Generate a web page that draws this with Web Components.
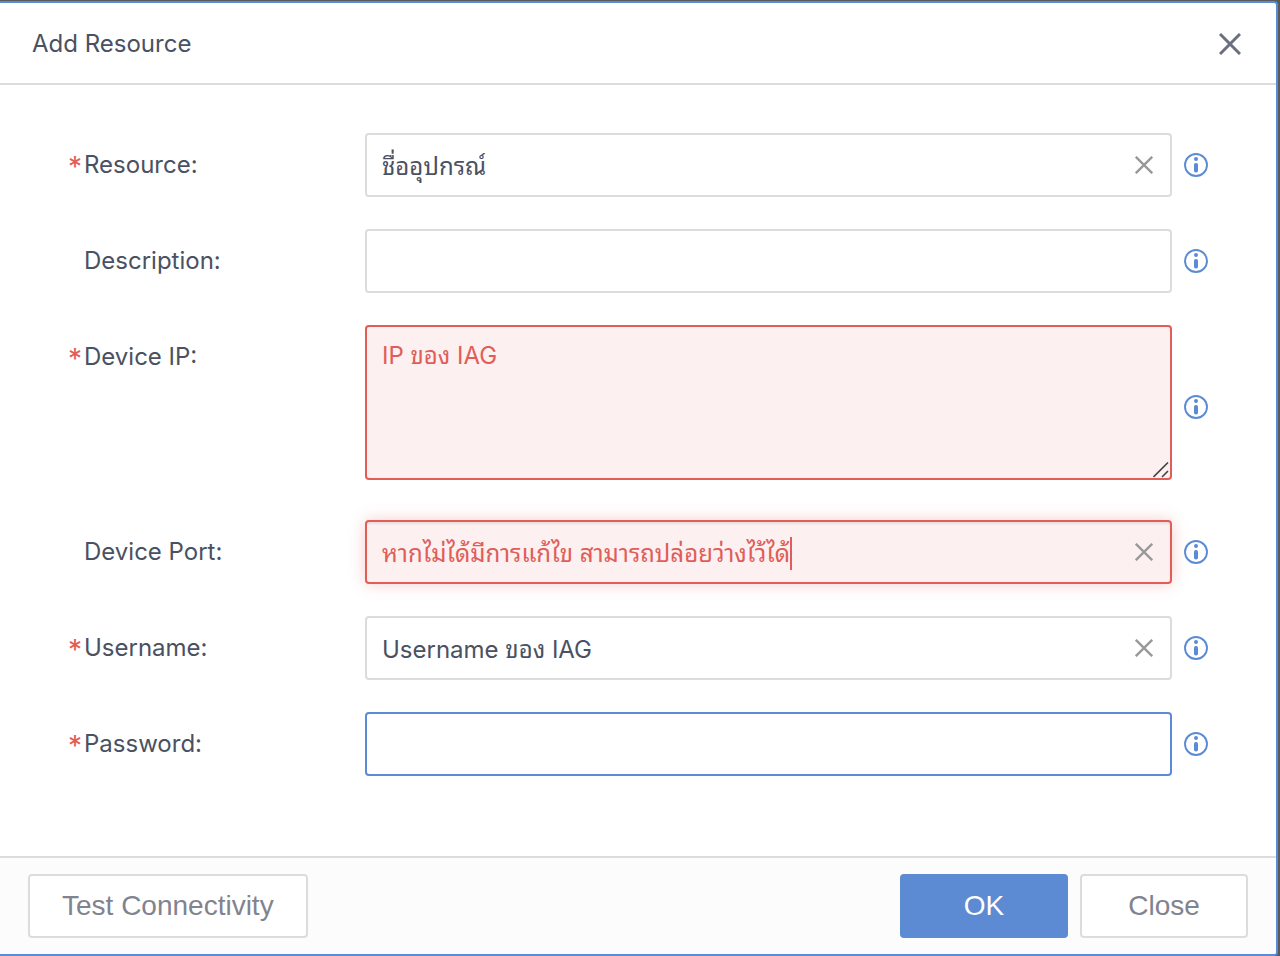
<!DOCTYPE html>
<html lang="en">
<head>
<meta charset="utf-8">
<meta name="viewport" content="width=device-width, initial-scale=1">
<title>Add Resource</title>
<style>
  body {
    margin: 0;
    background: #5a5a5a;
    color: #4a5162;
    font-family: Inter, "Noto Sans Thai Looped", Loma, Garuda, "Noto Sans Thai", "Noto Sans", sans-serif;
    font-size: 24px;
  }
</style>
</head>
<body>
<resource-dialog heading="Add Resource">
  <form-field name="resource" value="ชื่ออุปกรณ์" required clearable>Resource:</form-field>
  <form-field name="description">Description:</form-field>
  <form-field name="ip" value="IP ของ IAG" required invalid multiline>Device IP:</form-field>
  <form-field name="port" value="หากไม่ได้มีการแก้ไข สามารถปล่อยว่างไว้ได้" invalid clearable caret>Device Port:</form-field>
  <form-field name="username" value="Username ของ IAG" required clearable>Username:</form-field>
  <form-field name="password" type="password" required active>Password:</form-field>
  <dialog-button slot="tools">Test Connectivity</dialog-button>
  <dialog-button slot="actions" primary>OK</dialog-button>
  <dialog-button slot="actions">Close</dialog-button>
</resource-dialog>

<script>
class InfoIcon extends HTMLElement {
  connectedCallback() {
    this.attachShadow({ mode: 'open' });
    this.shadowRoot.innerHTML = `
      <style>
        :host { display: block; width: 24px; height: 24px; }
        svg { display: block; }
      </style>
      <svg width="24" height="24" viewBox="0 0 24 24" fill="none" aria-hidden="true">
        <circle cx="12" cy="12" r="11" stroke="#5c8bd6" stroke-width="1.9"/>
        <circle cx="12" cy="6" r="2" fill="#5c8bd6"/>
        <rect x="10" y="10" width="4" height="9.6" rx="1.8" fill="#5c8bd6"/>
      </svg>
    `;
  }
}

class FormField extends HTMLElement {
  connectedCallback() {
    this.attachShadow({ mode: 'open' });
    const type = this.getAttribute('type') || 'text';
    const multiline = this.hasAttribute('multiline');
    const control = multiline
      ? `<textarea id="control"></textarea>
         <svg class="grip" width="16" height="16" viewBox="0 0 16 16" stroke="#444" stroke-width="1.6" aria-hidden="true">
           <path d="M.5 15L15 .5M9 15L15 9"/>
         </svg>`
      : `<input id="control" type="${type}" autocomplete="off">`;
    const clear = this.hasAttribute('clearable')
      ? `<button type="button" class="clear" aria-label="Clear">
           <svg width="18" height="18" viewBox="0 0 18 18" stroke="#999" stroke-width="2.4" aria-hidden="true">
             <path d="M.8 .8l16.4 16.4M17.2 .8L.8 17.2"/>
           </svg>
         </button>`
      : '';

    this.shadowRoot.innerHTML = `
      <style>
        :host {
          display: grid;
          grid-template-columns: 16px 281px 1fr 24px;
          align-items: center;
        }
        .star {
          align-self: start;
          line-height: 68px;
          font-size: 28px;
          color: #e05d58;
        }
        label {
          grid-column: 2;
          align-self: start;
          line-height: 64px;
        }
        .star, label {
          height: 64px;
        }
        .box {
          grid-column: 3;
          position: relative;
          margin-right: 12px;
        }
        :host([multiline]) .box {
          padding-bottom: 8px;
        }
        input, textarea {
          display: block;
          box-sizing: border-box;
          width: 100%;
          height: 64px;
          margin: 0;
          padding: 0 56px 2px 15px;
          border: 2px solid #dcdcdc;
          border-radius: 4px;
          outline: none;
          background: #fff;
          color: inherit;
          font: inherit;
        }
        textarea {
          height: 155px;
          padding: 11px 15px;
          line-height: 36px;
          resize: vertical;
        }
        textarea::-webkit-resizer {
          display: none;
        }
        :host([invalid]) :is(input, textarea) {
          border-color: #e05d58;
          background: #fcf0f0;
          color: #e05d58;
        }
        :host([active]) input {
          border-color: #5c8bd6;
        }
        :host([caret]) input {
          box-shadow: 0 0 16px rgba(224, 93, 88, .3), inset 0 2px 2px rgba(0, 0, 0, .08);
        }
        .grip {
          position: absolute;
          right: 3px;
          bottom: 10px;
          pointer-events: none;
        }
        .clear {
          position: absolute;
          top: 23px;
          right: 19px;
          display: block;
          padding: 0;
          border: 0;
          background: none;
          cursor: pointer;
        }
        .clear svg {
          display: block;
        }
        .caret {
          position: absolute;
          top: 17px;
          width: 2px;
          height: 33px;
          background: #e05d58;
        }
      </style>
      ${this.hasAttribute('required') ? '<span class="star" aria-hidden="true">*</span>' : ''}
      <label for="control"><slot></slot></label>
      <div class="box">${control}${clear}</div>
      <info-icon></info-icon>
    `;

    const el = this.shadowRoot.getElementById('control');
    el.name = this.getAttribute('name');
    el.value = this.getAttribute('value') || '';

    const button = this.shadowRoot.querySelector('.clear');
    if (button) {
      button.addEventListener('click', () => {
        el.value = '';
        el.focus();
      });
    }
    if (this.hasAttribute('caret')) this.drawCaret(el);
  }

  // resting caret at the end of the value, until the field is really focused
  drawCaret(el) {
    const ctx = document.createElement('canvas').getContext('2d');
    ctx.font = getComputedStyle(el).font;
    const caret = document.createElement('span');
    caret.className = 'caret';
    caret.style.left = Math.round(17 + ctx.measureText(el.value).width) + 'px';
    el.after(caret);
    el.addEventListener('focus', () => caret.remove(), { once: true });
  }
}

class DialogButton extends HTMLElement {
  connectedCallback() {
    this.attachShadow({ mode: 'open' });
    this.shadowRoot.innerHTML = `
      <style>
        :host { display: block; }
        button {
          display: block;
          box-sizing: border-box;
          min-width: 168px;
          height: 64px;
          padding: 0 32px;
          border: 2px solid #dcdcdc;
          border-radius: 4px;
          background: #fff;
          color: #81838f;
          font: 28px "Liberation Sans", Arial, sans-serif;
          cursor: pointer;
        }
        :host([primary]) button {
          border-color: #5c8bd3;
          background: #5c8bd3;
          color: #fff;
        }
      </style>
      <button type="button"><slot></slot></button>
    `;
  }
}

class ResourceDialog extends HTMLElement {
  connectedCallback() {
    this.attachShadow({ mode: 'open' });
    this.shadowRoot.innerHTML = `
      <style>
        :host {
          display: flex;
          box-sizing: border-box;
          min-height: 100vh;
          padding: 1px 2px 0 0;
        }
        section {
          flex: 1;
          display: flex;
          flex-direction: column;
          border: 2px solid #5c8bd6;
          border-left: 0;
          border-radius: 0 4px 4px 0;
          background: #fff;
          overflow: hidden;
        }
        header {
          display: flex;
          justify-content: space-between;
          align-items: center;
          height: 80px;
          padding: 0 35px 0 32px;
          border-bottom: 2px solid #dcdcdc;
        }
        h1 {
          margin: 0;
          font-size: inherit;
          font-weight: 400;
        }
        .close {
          padding: 2px 0 0;
          border: 0;
          background: none;
          cursor: pointer;
        }
        .close svg {
          display: block;
        }
        form {
          flex: 1;
          display: flex;
          flex-direction: column;
          gap: 32px;
          padding: 48px 68px;
        }
        footer {
          display: flex;
          justify-content: space-between;
          padding: 16px 28px;
          border-top: 2px solid #dcdcdc;
          background: #fcfcfc;
        }
        .actions {
          display: flex;
          gap: 12px;
        }
      </style>
      <section role="dialog" aria-labelledby="title">
        <header>
          <h1 id="title">${this.getAttribute('heading')}</h1>
          <button type="button" class="close" aria-label="Close dialog">
            <svg width="22" height="22" viewBox="0 0 22 22" stroke="#6b6f7e" stroke-width="3" aria-hidden="true">
              <path d="M1 1l20 20M21 1L1 21"/>
            </svg>
          </button>
        </header>
        <form><slot></slot></form>
        <footer>
          <slot name="tools"></slot>
          <div class="actions"><slot name="actions"></slot></div>
        </footer>
      </section>
    `;
  }
}

customElements.define('info-icon', InfoIcon);
customElements.define('form-field', FormField);
customElements.define('dialog-button', DialogButton);
customElements.define('resource-dialog', ResourceDialog);
</script>
</body>
</html>
